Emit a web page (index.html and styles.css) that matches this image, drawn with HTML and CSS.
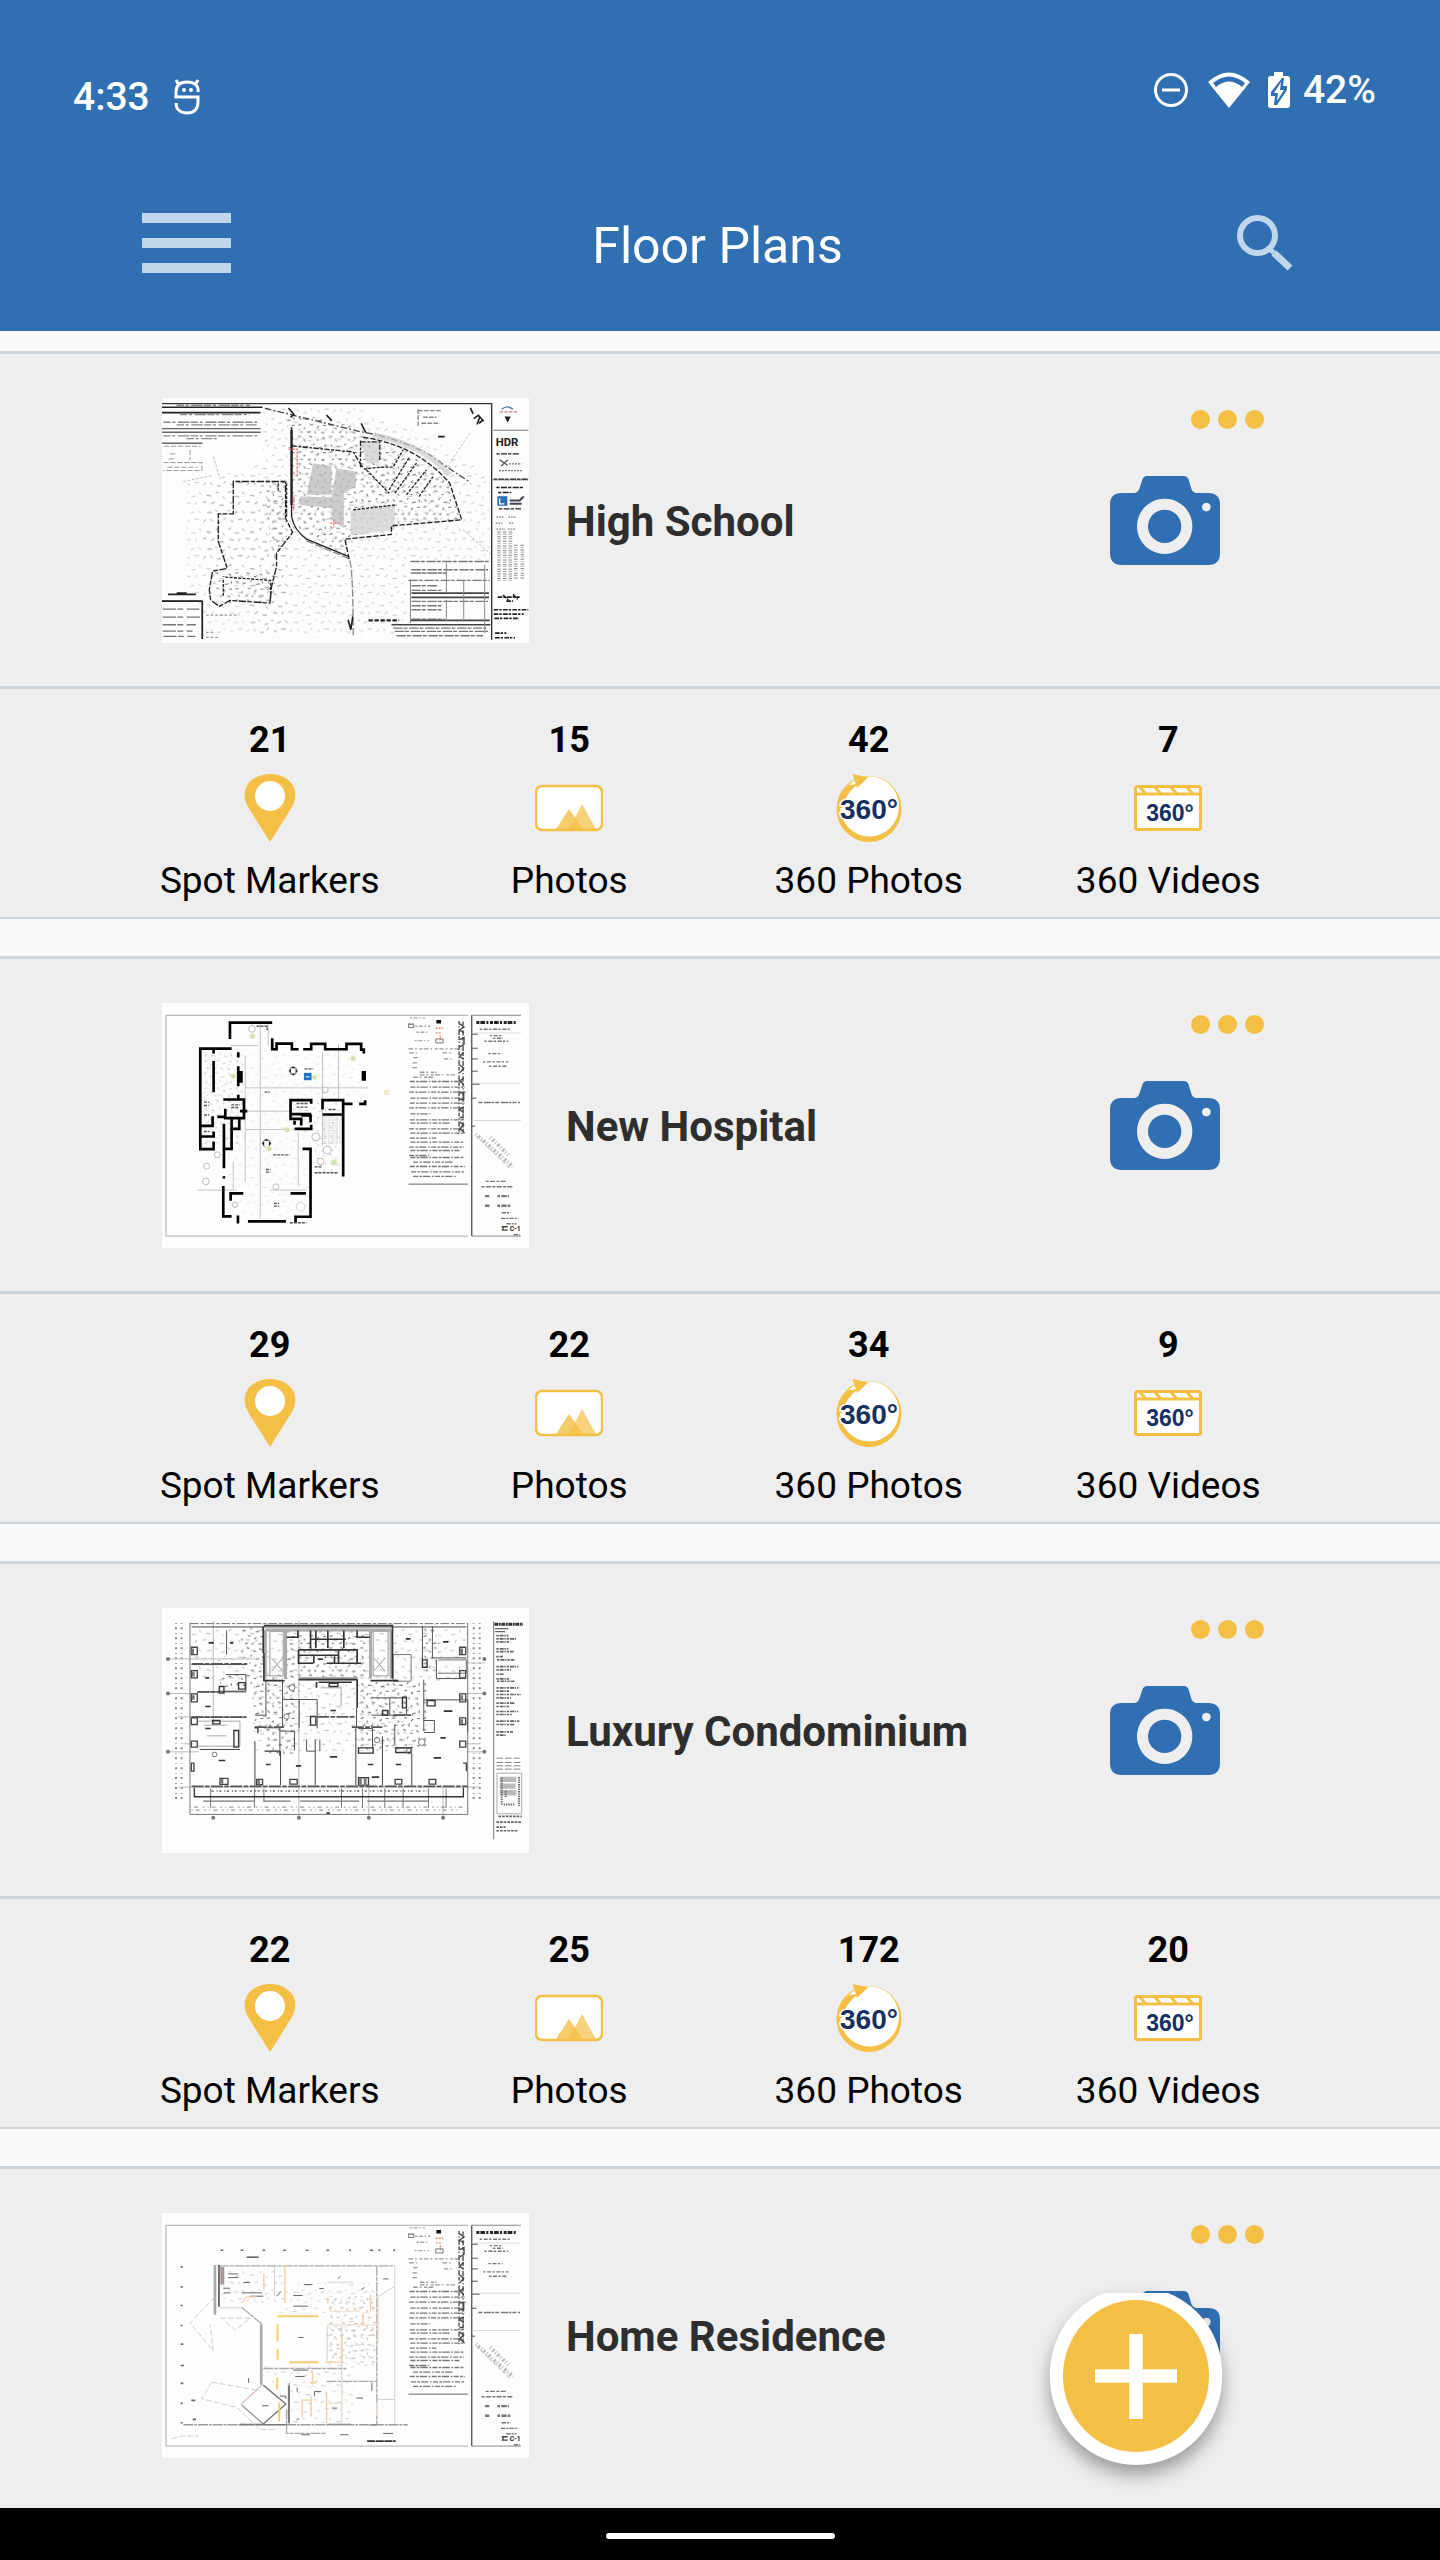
FILE: index.html
```html
<!DOCTYPE html>
<html lang="en">
<head>
<meta charset="utf-8">
<meta name="viewport" content="width=device-width, initial-scale=1">
<title>Floor Plans</title>
<link rel="stylesheet" href="styles.css">
</head>
<body>
<svg class="defs" aria-hidden="true">
  <defs>
    <pattern id="speckle" width="130" height="110" patternUnits="userSpaceOnUse">
      <path d="M5 8l9-3M25 20h12M48 6l4 7M70 16l13 2M98 8h7M118 20l5 6M10 38l12 3M36 44l4-8M58 36h11M84 42l10-6M108 46h13M4 62h6M22 70l11-4M46 62l7 8M72 68h14M96 60l5 5M114 74l11-3M12 92l8 4M34 88h13M60 96l8-7M82 88l4 6M102 98h10M122 90l4-6" fill="none" stroke="#777" stroke-width="2"/>
    </pattern>
    <pattern id="speckle-dark" width="94" height="82" patternUnits="userSpaceOnUse">
      <path d="M4 6h9M22 14l4 6M38 5l9 2M60 16h6M78 8l7 5M8 30l5 7M26 36h10M50 32l4-5M66 40l10-2M86 30v7M5 54l9-3M24 60v6M42 52h8M62 62l5-6M80 54h8M12 74h6M34 76l8-4M56 72v6M74 76h9" fill="none" stroke="#333" stroke-width="3"/>
    </pattern>
    <pattern id="hatch" width="12" height="8" patternUnits="userSpaceOnUse">
      <path d="M0 2h12M3 0v8" stroke="#bbb" stroke-width="1"/>
    </pattern>
  </defs>
</svg>
<svg class="symbols" aria-hidden="true">
  <symbol id="i-pin" viewBox="0 0 68 68">
    <path d="M34 68 12 33C2 14 16 0 34 0s32 14 22 33z" fill="#f4bf45"/>
    <circle cx="34" cy="22" r="15" fill="#fff"/>
  </symbol>
  <symbol id="i-photo" viewBox="0 0 68 68">
    <rect x="1" y="12" width="66" height="44" rx="6" fill="#fff" stroke="#f4bf45" stroke-width="2.5"/>
    <path d="M34 55 47 30 61 55z" fill="#f4bf45" opacity=".7"/>
    <path d="M21 55 34 35 48 55z" fill="#f4bf45" opacity=".8"/>
  </symbol>
  <symbol id="i-360" viewBox="0 0 68 68">
    <ellipse cx="34" cy="35" rx="32.500" ry="33" fill="#f4bf45"/>
    <ellipse cx="34.500" cy="32.500" rx="29.500" ry="30" fill="#fff"/>
    <path d="M14 11Q4 20 2 34h5Q10 20 23 10z" fill="#f4bf45"/>
    <path d="M17.500 0 33 3.500 22 14z" fill="#f4bf45"/>
    <text x="34" y="45" text-anchor="middle" class="deg deg-lg">360°</text>
  </symbol>
  <symbol id="i-video" viewBox="0 0 68 68">
    <rect x="1.500" y="12.500" width="65" height="43" rx="2" fill="#fff" stroke="#f4bf45" stroke-width="3"/>
    <path d="M1 20h66M5 12l7 8M20 12l7 8M36 12l7 8M52 12l7 8" stroke="#f4bf45" stroke-width="3"/>
    <text x="36" y="47" text-anchor="middle" class="deg deg-sm">360°</text>
  </symbol>
  <symbol id="i-camera" viewBox="0 0 330 267">
    <path fill="#316fb3" fill-rule="evenodd" d="M112 0H222Q232 0 236 11L244 38Q248 50 260 51H295Q330 51 330 86V232Q330 267 295 267H35Q0 267 0 232V86Q0 51 35 51H72Q84 50 88 38L97 11Q101 0 112 0ZM164 68A83 83 0 1 0 164.100 68ZM289 80A13 13 0 1 0 289.100 80Z"/>
    <circle cx="164" cy="151" r="50" fill="#316fb3"/>
  </symbol>

  <!-- Title block and notes shared by the sheets of one drawing set -->
  <symbol id="sheet" viewBox="66 43 1102 734">
    <g fill="none" stroke="#aaa" stroke-width="3">
      <path d="M78 79H985M78 742H985M78 79V742"/>
      <path d="M996 79H1144M996 742H1144" stroke="#888"/>
      <path d="M996 79V742" stroke="#555" stroke-width="4"/>
      <path d="M996 132h148M996 283h148M996 395h148" stroke="#ccc" stroke-width="2"/>
      <path d="M806 586H985" stroke="#666"/>
      <path d="M996 136h18M996 178h18M996 210h18M996 247h18M996 286h24M996 328h14M996 412h10" stroke="#555"/>
    </g>
    <g fill="none" stroke="#777" stroke-width="4">
      <path d="M810 87h50M806 104h16M826 112h48M830 130h36M824 155h44" stroke-dasharray="7 4 13 5 4 6" stroke="#aaa"/>
      <path d="M806 180h160M808 192h24M908 192h30M820 206h14M912 210h24M818 222h18M818 236h20M840 250h50M820 265h60M840 258h110" stroke-dasharray="14 6 5 8 9 4" stroke="#999"/>
      <path d="M810 278h160M812 295h164M808 310h170M812 328h160M810 343h164M808 357h160M812 375h60M810 393h160M812 403h120M808 420h160M812 433h164M810 448h80M812 460h160M808 475h164M812 485h150M808 500h60M812 506h160M820 520h120M810 533h165M814 549h160M820 563h130" stroke-dasharray="15 4 8 3 22 5 5 4"/>
      <path d="M1010 101h118" stroke="#222" stroke-width="9" stroke-dasharray="9 3 14 4 6 5"/>
      <path d="M1020 121h90M1050 140h40M1034 157h72M1060 148h30M1046 194h42M1030 219h76M1048 232h56" stroke-dasharray="7 5 12 4"/>
      <path d="M1016 341h125" stroke-dasharray="12 5 22 2 7 3"/>
      <path d="M1038 578h60M1026 594h92" stroke-dasharray="9 4 15 4"/>
      <path d="M1036 622h72M1036 651h76" stroke-dasharray="13 24 8 4 16 3" stroke-width="7"/>
      <path d="M1086 672h26M1084 689h52M1100 705h30M1122 738h18" stroke-dasharray="13 3 6 3"/>
      <path d="M1008 436l112 98M1052 446l54 52" stroke="#bbb" stroke-width="12" stroke-dasharray="3 6 7 5"/>
      <path d="M1010 442l100 96" stroke="#ccc" stroke-dasharray="12 6"/>
    </g>
    <path d="M890 93h14v11h-14z" fill="#111"/>
    <path d="M888 118h22M888 132h18M902 140v14" stroke="#e8965a" stroke-width="4" stroke-dasharray="6 3"/>
    <path d="M888 150h22v12h-22zM806 106h16v10h-16z" fill="none" stroke="#777" stroke-width="3"/>
    <path d="M958 96v340M970 98v330" stroke="#444" stroke-width="4" stroke-dasharray="11 5 4 6 16 4"/>
    <path d="M959 104l14 10-14 10 14 8M960 152l13-6v20l-13 8M972 190l-12 12 12 10M960 228l12 10-12 14M972 268l-12 8 12 12M960 312h12v20h-12M972 354l-12 8 12 10M960 386h12M960 400l12 8-12 12 14 12" fill="none" stroke="#444" stroke-width="4"/>
    <path d="M1086 714h18M1086 724h18M1090 712v14" stroke="#444" stroke-width="4"/>
    <text x="1110" y="726" font-size="20" font-weight="700" font-family="Roboto, sans-serif" fill="#222">C-1</text>
  </symbol>
</svg>

<header class="app-header">
  <div class="status-bar">
    <div class="status-left">
      <span>4:33</span>
      <svg width="26" height="36" viewBox="0 0 26 36" fill="none" stroke="#fff" stroke-width="3" aria-hidden="true">
        <path d="M24 13C25 6 20 3 13 3S2 6 2 13V18H24V23C24 30 20 34 13 34S2 30 2 24M2 1l3 5M24 1l-3 5"/>
        <circle cx="10" cy="11" r="1" stroke-width="2"/><circle cx="17" cy="11" r="1" stroke-width="2"/>
      </svg>
    </div>
    <div class="status-right">
      <svg width="36" height="36" viewBox="0 0 36 36" fill="none" stroke="#fff" stroke-width="3" aria-hidden="true">
        <circle cx="18" cy="18" r="15.500"/><path d="M9 18h18"/>
      </svg>
      <svg class="wifi" width="42" height="36" viewBox="0 0 42 36" aria-hidden="true">
        <path fill="#fff" fill-rule="evenodd" d="M0 10Q21-9 42 10L21 36ZM5 11L8 15Q21 4 34 15L37 11Q21-2 5 11Z"/>
      </svg>
      <svg class="battery" width="22" height="36" viewBox="0 0 22 36" aria-hidden="true">
        <path d="M6 0h9v4h4q3 0 3 3v26q0 3-3 3H3q-3 0-3-3V7q0-3 3-3h3z" fill="#fff"/>
        <path d="M14 6 3 20v4h4l-1 9h3l10-15v-4h-4l1-8z" fill="#316fb3"/>
        <path d="M13 10 6 21h4l-1 8 7-11h-4z" fill="#fff"/>
      </svg>
      <span>42%</span>
    </div>
  </div>
  <div class="toolbar">
    <button class="icon-button menu-button" type="button" aria-label="Menu"><i></i><i></i><i></i></button>
    <h1>Floor Plans</h1>
    <button class="icon-button search-button" type="button" aria-label="Search">
      <svg width="56" height="56" viewBox="0 0 56 56" fill="none" stroke="#c0d6ea" aria-hidden="true">
        <circle cx="20.500" cy="20.500" r="17.500" stroke-width="6"/>
        <path d="M34 35 37 38" stroke-width="5"/><path d="M37 38 53 53" stroke-width="7"/>
      </svg>
    </button>
  </div>
</header>

<main class="plans">
  <article class="plan">
    <div class="plan-head">
      <svg class="thumb" viewBox="66 55 1102 734" role="img" aria-label="High School site plan">
        <path d="M370 80H660L900 190 1050 290V540H800V775H330V560H190V300L370 250z" fill="url(#speckle)" opacity=".7"/>
        <path d="M140 300H450V770H200L140 600z" fill="url(#speckle)" opacity=".6"/>
        <path d="M440 90 640 140 700 200 800 215 930 310 965 420 755 440 620 475 620 530 460 450z" fill="url(#speckle-dark)" opacity=".75"/>
        <path d="M205 570H405V670H240zM370 300H440V480L400 560z" fill="url(#speckle-dark)" opacity=".7"/>
        <path d="M520 250 575 258V345L500 345ZM590 265 648 275V320L612 340V445L575 420V385L480 375V350L575 352Z" fill="#bbb" opacity=".75"/>
        <path d="M632 392 765 378V450L632 466ZM665 185H718V250H680z" fill="#d2d2d2" opacity=".8"/>
        <g fill="none" stroke="#222" stroke-width="4">
          <path d="M66 71H1056V780" stroke="#333"/>
          <path d="M66 82H368M66 98H362" stroke-width="5"/>
          <path d="M110 76h220M120 104h210M70 127h290M110 135h240M70 168h290M140 176h90" stroke="#888" stroke-dasharray="22 5 9 8 34 4"/>
          <path d="M66 146H362M66 157H362M66 190H188" stroke="#666"/>
          <path d="M72 199h110M90 222h20M150 210v30M86 237h22M70 248h116v24h-116M82 262h90" stroke="#999" stroke-width="3" stroke-dasharray="16 5"/>
          <path d="M455 142V410Q462 450 500 478L625 530"/>
          <path d="M455 150V376" stroke-width="7"/>
          <path d="M500 483 628 537Q640 560 640 770" stroke="#888" stroke-dasharray="22 7"/>
          <path d="M455 198 640 216 668 262M662 182V262M662 186H720V240" stroke-dasharray="16 5 8 4"/>
          <path d="M375 85 660 155Q780 175 870 225Q910 255 990 306" stroke="#444" stroke-dasharray="20 7 5 7"/>
          <path d="M670 172Q830 195 930 310L966 420 755 438V464L615 478 628 537" stroke-dasharray="16 5"/>
          <path d="M672 268Q720 260 760 262L790 210M680 270 748 340M748 330 810 230M765 340 830 250M800 345 860 270M838 350 880 290M640 390 770 375" stroke-dasharray="9 4"/>
          <path d="M700 165Q850 195 930 285" stroke="#ccc" stroke-width="16" opacity=".7"/>
          <path d="M436 305H280V402H235V485L262 566 218 574 208 630 212 660 238 680 270 662 390 670 395 620 410 560V520L458 458 437 415V305" stroke-dasharray="14 5 22 4"/>
          <path d="M415 310V332M440 310V410M250 600V650M256 592l136 10v60" stroke-dasharray="9 4"/>
          <path d="M990 160 930 250M970 450 1055 525M220 230l20 66M130 305l85-18" stroke="#999" stroke-width="2" stroke-dasharray="8 5"/>
          <path d="M835 88V138M835 92h70M850 112h40M845 130h55" stroke="#888" stroke-dasharray="14 4"/>
          <path d="M446 84l16 20-10 8M664 130l14 28M560 105l16 18M625 720l8 30 6-40M895 170h20" stroke-width="5"/>
          <path d="M992 84l8 18M1002 116l14-10 16 18M1012 134l8-22M1018 130l12-10" stroke-width="5"/>
          <path d="M84 644h84M110 640h30" stroke-width="5"/>
          <path d="M66 664H187V778M68 688h110M68 712h118M68 735h100M68 754h90M70 770h96" stroke="#777" stroke-dasharray="40 4 18 10"/>
          <path d="M187 664V778M66 664H187" stroke-width="5"/>
          <path d="M812 545H1050M815 570H1045M815 580H920M806 602H1050M815 618h80M815 632h90M815 665h230M815 678h90M815 690h90M815 718h100M760 745h280M765 755h280M770 768h260" stroke="#777" stroke-dasharray="28 3 12 5"/>
          <path d="M815 640H1048M815 653H1048M755 735H1052M812 722H1050" stroke="#444" stroke-width="5"/>
          <path d="M812 600V730M920 550V640M972 602V725M920 660V725M1035 555V760M920 580H812" stroke="#888" stroke-width="3"/>
          <path d="M686 722h92" stroke-dasharray="13 5" stroke-width="7"/>
          <path d="M198 706h100M198 758h24M198 773h42" stroke="#999" stroke-dasharray="8 6"/>
          <path d="M1060 151h106M1060 300h106" stroke="#777" stroke-width="3"/>
          <path d="M1062 298h104M1070 323h80M1075 338h40M1078 387h66M1070 222h68" stroke-dasharray="10 4 18 3"/>
          <path d="M1080 240l24 16M1104 240l-20 18" stroke="#655" stroke-width="4"/><path d="M1108 252h38M1078 272h70" stroke="#777" stroke-dasharray="6 3"/>
          <path d="M1070 412h22M1068 430h20M1106 412h24M1108 430h14M1070 448h26M1105 448h22" stroke="#777" stroke-dasharray="5 3"/>
          <path d="M1078 455V608M1095 455V608M1112 455V608M1128 495V600M1148 495V600" stroke="#888" stroke-width="11" stroke-dasharray="3 4 2 5"/>
          <path d="M1074 652h66M1090 646l16 14M1120 644l14 14M1100 664h20M1062 690h104M1062 703h90M1064 716h74M1066 760h34M1066 774h60" stroke-width="5" stroke-dasharray="14 3 7 4"/>
          <path d="M1086 88q16-14 34 0" stroke="#4a78a8"/><path d="M1080 96h56" stroke="#c77" stroke-dasharray="10 4"/>
          <path d="M1098 112h12l-6 12z" fill="#222"/>
          <path d="M446 208h26V290M462 350v44M570 430h30M582 418v26" stroke="#ee8280" stroke-dasharray="8 3"/>
        </g>
        <path d="M1073 349h30v29h-30z" fill="#316fb3"/>
        <path d="M1080 356v16h14" fill="none" stroke="#fff" stroke-width="4"/>
        <path d="M1110 362h30l12-12M1110 372h36" fill="none" stroke="#445" stroke-width="6"/>
        <text x="1068" y="197" font-size="34" font-weight="700" font-family="Roboto, sans-serif" fill="#222">HDR</text>
      </svg>
      <h2>High School</h2>
      <div class="plan-actions">
        <button class="icon-button more" type="button" aria-label="More options for High School"><i></i><i></i><i></i></button>
        <button class="icon-button" type="button" aria-label="Capture for High School"><svg class="camera" aria-hidden="true"><use href="#i-camera"/></svg></button>
      </div>
    </div>
    <ul class="stats">
      <li><b>21</b><svg aria-hidden="true"><use href="#i-pin"/></svg><span>Spot Markers</span></li>
      <li><b>15</b><svg aria-hidden="true"><use href="#i-photo"/></svg><span>Photos</span></li>
      <li><b>42</b><svg aria-hidden="true"><use href="#i-360"/></svg><span>360 Photos</span></li>
      <li><b>7</b><svg aria-hidden="true"><use href="#i-video"/></svg><span>360 Videos</span></li>
    </ul>
  </article>

  <article class="plan">
    <div class="plan-head">
      <svg class="thumb" viewBox="66 43 1102 734" role="img" aria-label="New Hospital floor plan">
        <use href="#sheet" x="66" y="43" width="1102" height="734"/>
        <path d="M185 185H665V340H510V690H255V480H185z" fill="url(#speckle)" opacity=".28"/>
        <path d="M190 190H310V470H190zM455 340H600V560H520V430H455z" fill="url(#speckle-dark)" opacity=".25"/>
        <path d="M548 382H606V466H548z" fill="url(#hatch)"/>
        <g fill="none" stroke="#c4c4c4" stroke-width="3">
          <path d="M361 100V690M385 100V170M316 200V580M548 190V470M596 165V330M316 297H685M316 367H450M316 422H450M172 604H290M390 604H500M270 170H355M475 430V590M280 520V600"/>
        </g>
        <g fill="none" stroke="#000" stroke-width="8">
          <path d="M270 150V101H397M397 148V181H410V164H456V181H476M490 181H514V165H556V181H620V165H664V182H672V194"/>
          <path d="M275 179H181V481H221V458M181 443H221V428M181 411H218V382M221 182V194M221 216V310M295 190V206M295 232V292M295 318V332M250 332H312V388H256V360M232 384H256M256 388H275V480H250M298 390V420H275M252 405V538M300 367H322"/>
          <path d="M514 345V334H452V390H484V410M452 376H514M464 396V408M484 380H512V400M464 420H514V408M548 362V334H610V563M548 377H610M610 345H638M658 345H676V334"/>
          <path d="M488 480H512V684H467V702M250 592V683H275M294 680V704M272 636V614H310M324 698H438M452 614H498M672 270V250"/>
          <path d="M302 246V282M672 246V276" stroke-width="13"/>
        </g>
        <g fill="#fff" stroke="#999" stroke-width="2">
          <circle cx="460" cy="246" r="12"/><circle cx="380" cy="464" r="12"/><circle cx="336" cy="120" r="10"/><circle cx="200" cy="532" r="9"/><circle cx="198" cy="578" r="10"/><circle cx="232" cy="498" r="9"/><circle cx="528" cy="444" r="12"/><circle cx="562" cy="484" r="12"/><circle cx="408" cy="594" r="9"/><circle cx="285" cy="648" r="8"/><circle cx="556" cy="303" r="9"/><circle cx="542" cy="518" r="10"/><circle cx="482" cy="654" r="13" stroke="#bbb"/>
        </g>
        <path d="M447 246l6-8v16zM473 246l-6-8v16zM460 232l-8 6h16zM460 260l-8-6h16zM366 464l7-8v16zM394 464l-7-8v16zM380 450l-8 6h16zM248 562h8v8h-8z" fill="#222"/>
        <path d="M350 112h32v12M274 348h26M274 356h22M192 340h16M192 350h14M192 378h16M374 310h16M400 498h50M378 542h14M378 550h14M402 644h16M402 652h16M192 428h16M470 344h34M470 355h34M566 362h22M524 534h22M524 552h70M494 240h26M450 702h50" fill="none" stroke="#555" stroke-width="4" stroke-dasharray="9 3"/>
        <path d="M492 252h23v22h-23z" fill="#1d72c4"/><path d="M497 264h12" stroke="#fff" stroke-width="3"/>
        <g fill="#c4e4cc" stroke="#f0e49a" stroke-width="3"><circle cx="338" cy="142" r="7"/><circle cx="280" cy="262" r="7"/><circle cx="524" cy="265" r="6"/><circle cx="640" cy="209" r="7"/><circle cx="388" cy="480" r="7"/><circle cx="442" cy="423" r="7"/><circle cx="583" cy="521" r="8"/><circle cx="740" cy="311" r="7" fill="#eee"/></g>
      </svg>
      <h2>New Hospital</h2>
      <div class="plan-actions">
        <button class="icon-button more" type="button" aria-label="More options for New Hospital"><i></i><i></i><i></i></button>
        <button class="icon-button" type="button" aria-label="Capture for New Hospital"><svg class="camera" aria-hidden="true"><use href="#i-camera"/></svg></button>
      </div>
    </div>
    <ul class="stats">
      <li><b>29</b><svg aria-hidden="true"><use href="#i-pin"/></svg><span>Spot Markers</span></li>
      <li><b>22</b><svg aria-hidden="true"><use href="#i-photo"/></svg><span>Photos</span></li>
      <li><b>34</b><svg aria-hidden="true"><use href="#i-360"/></svg><span>360 Photos</span></li>
      <li><b>9</b><svg aria-hidden="true"><use href="#i-video"/></svg><span>360 Videos</span></li>
    </ul>
  </article>

  <article class="plan">
    <div class="plan-head">
      <svg class="thumb" viewBox="66 51 1102 734" role="img" aria-label="Luxury Condominium floor plan">
        <path d="M155 100H985V270H820V480H340V270H155z" fill="url(#speckle)" opacity=".8"/>
        <path d="M240 250H480V420H350V290H240zM650 270H860V480H650zM325 185H375V400H345zM440 120H680V260H440zM375 400H465V490H375zM300 105H370V200H300zM845 105H890V240H845z" fill="url(#speckle-dark)" opacity=".8"/>
        <path d="M108 96V635M125 96V635M1002 96V635M1020 96V635" stroke="#888" stroke-width="6" stroke-dasharray="2 10 6 12"/>
        <g fill="none" stroke="#777" stroke-width="3">
          <path d="M84 203H340M84 307H175M84 482H175M115 377H160M130 458H160M115 588H1022M975 215H1035M975 307H1035M975 458H1020M980 482H1035" stroke="#bbb"/>
          <path d="M220 90V400M477 90V680M687 588V680M910 588V680" stroke="#bbb"/>
          <path d="M150 95V670M984 95V670M150 670H984M212 592V650M344 592V650M372 592V630M605 592V650M668 592V650M735 592V650M790 592V650M866 592V650M919 592V650"/>
          <path d="M150 97H984" stroke-dasharray="26 6 10 5"/>
          <path d="M150 648H984M155 657H960" stroke-dasharray="3 9 12 14 5 10" stroke="#888"/>
          <path d="M215 600H860" stroke-dasharray="6 9 3 5" stroke="#888" stroke-width="6"/>
          <path d="M190 630H345M370 630H452M480 630H658M682 630H866" stroke-width="4"/>
          <path d="M155 107H370M760 107H980M155 220H320M172 302H318M155 378H318M180 475H300M345 450V582M422 480V582M526 445V582M648 408V582M728 436V582M816 486V582" stroke="#444"/>
          <path d="M260 118V190M378 270V372M346 372H380M428 270V410M431 325H532V412M478 325V410M650 350V408M695 320H800V372H695M750 320V372M852 265V420M852 326H984V424M848 105V220M878 105V200H980M890 205V262H980M258 250H318V300H236M372 410H420V478M422 420H464V478M655 412H698V470M765 400V460M764 470H816M500 445V480H526M540 445V480M852 388H884V424H852" stroke="#555"/>
          <path d="M172 390H300V465H172M548 290H604V345M192 402h70M200 434h60" stroke="#aaa"/>
          <path d="M390 120H430V254H390zM700 120H745V254H700zM395 200l34 40M429 200l-34 40M702 200l34 40M736 200l-34 40" stroke="#999"/>
          <path d="M760 190H814V270H760zM895 206H980V246H895" stroke="#777"/>
        </g>
        <path d="M372 106H758M376 116V262M437 116V262M692 116V262M754 116V262M478 262H654M376 116H754" fill="none" stroke="#aaa" stroke-width="9"/>
        <g fill="none" stroke="#333" stroke-width="5">
          <path d="M370 105V185M372 103H758V262M372 185V268H434M692 268H776M476 265H652M652 265V350M530 272V290M536 273H636M512 144H618M476 176H654M476 192H596M596 176V216M476 176V218M522 195V216M584 195V216M652 176V216M476 216H520M560 216H664M512 170V118M528 118V170M564 118V170M612 118V170M440 138H474V118M652 118V138H690"/>
          <path d="M163 590V617H971V590" stroke-width="4"/>
          <path d="M155 218H322M155 586H984M172 302H236M155 378H320M344 408H432M636 408H728M760 372H820M532 377H650" stroke="#555" stroke-dasharray="36 4 14 4"/>
          <path d="M296 274h20v20h-20zM238 286h14v20h-14zM282 418h14v50h-14zM862 328h24v16h-24zM788 318h12v32h-12zM728 358h16v14h-16zM512 376h16v26h-16zM344 410h10v16M374 480h46v14M656 470h44v16h-44zM768 470h46v14h-46zM848 206h14v22h-14zM218 388h22v10h-22zM568 276h26v10h-26z" stroke-width="4"/>
          <path d="M154 168h18v22h-18zM154 238h18v22h-18zM154 308h18v24h-18zM154 380h18v20h-18zM154 450h18v18h-18zM154 516h8v24h-8zM960 168h18v22h-18zM960 238h18v22h-18zM960 308h18v24h-18zM960 380h18v20h-18zM960 450h18v18h-18zM970 516h10v24M240 562h24v18h-24zM350 565h18v16h-18zM450 565h22v14h-22zM656 560h30v22h-30zM766 565h20v14h-20zM868 565h20v14h-20z" stroke="#444" stroke-width="4"/>
          <path d="M158 172v16M160 242v14M160 312v14M246 564v14M356 566v14M662 562v18M676 562v18M966 172v16M966 312v14M966 384v14" stroke="#777" stroke-width="8"/>
        </g>
        <g fill="#777"><circle cx="84" cy="203" r="6"/><circle cx="84" cy="307" r="6"/><circle cx="84" cy="482" r="6"/><circle cx="1034" cy="203" r="6"/><circle cx="1034" cy="307" r="6"/><circle cx="1034" cy="482" r="6"/><circle cx="220" cy="680" r="6"/><circle cx="477" cy="680" r="6"/><circle cx="687" cy="680" r="6"/><circle cx="910" cy="680" r="6"/></g>
        <g fill="none" stroke="#777" stroke-width="3"><circle cx="456" cy="289" r="9"/><circle cx="440" cy="376" r="8"/><circle cx="224" cy="490" r="7"/><circle cx="712" cy="447" r="8"/><circle cx="846" cy="453" r="10"/><circle cx="808" cy="480" r="8"/></g>
        <path d="M206 155h16M270 155h10M798 143h14M910 152h16M196 260h12M196 346h16M196 412h16M236 508h20M378 520h14M468 524h16M572 358h16M570 497h22M684 520h16M768 520h16M882 500h22M902 440h16M912 360h26M560 666h10M534 204h16M696 558h22" stroke="#333" stroke-width="5"/>
        <path d="M1062 90V745" stroke="#777" stroke-width="3"/>
        <g fill="none" stroke="#666">
          <path d="M1064 99h86" stroke="#333" stroke-width="9" stroke-dasharray="11 2 6 2"/>
          <path d="M1066 112h40M1066 121h30" stroke-width="4"/>
          <path d="M1070 133h36M1070 143h60M1070 152h42M1070 173h36M1070 181h52M1070 196h20M1072 206h52M1070 226h66M1070 236h44M1070 249h24M1070 263h40M1072 270h52M1070 290h66M1070 300h40M1070 310h74M1070 320h44M1070 336h56M1070 346h40M1070 361h66M1070 370h46M1070 390h70M1070 400h56M1070 422h50M1070 432h30" stroke-width="5" stroke-dasharray="7 3 12 2 4 3"/>
          <path d="M1070 501h70M1070 514h75M1070 524h76M1070 534h76" stroke="#888" stroke-width="3" stroke-dasharray="20 6"/>
          <path d="M1072 546H1146V668H1072z" stroke="#aaa" stroke-width="3"/>
          <path d="M1080 565H1130M1080 585h48M1080 605h50" stroke="#bbb" stroke-width="16"/>
          <path d="M1086 560V642M1138 558V645M1092 640h32M1098 600v20" stroke-width="6" stroke-dasharray="4 3"/>
          <path d="M1076 676h70M1070 693h76M1070 708h28M1070 719h66" stroke-width="5" stroke-dasharray="8 3"/>
        </g>
      </svg>
      <h2>Luxury Condominium</h2>
      <div class="plan-actions">
        <button class="icon-button more" type="button" aria-label="More options for Luxury Condominium"><i></i><i></i><i></i></button>
        <button class="icon-button" type="button" aria-label="Capture for Luxury Condominium"><svg class="camera" aria-hidden="true"><use href="#i-camera"/></svg></button>
      </div>
    </div>
    <ul class="stats">
      <li><b>22</b><svg aria-hidden="true"><use href="#i-pin"/></svg><span>Spot Markers</span></li>
      <li><b>25</b><svg aria-hidden="true"><use href="#i-photo"/></svg><span>Photos</span></li>
      <li><b>172</b><svg aria-hidden="true"><use href="#i-360"/></svg><span>360 Photos</span></li>
      <li><b>20</b><svg aria-hidden="true"><use href="#i-video"/></svg><span>360 Videos</span></li>
    </ul>
  </article>

  <article class="plan">
    <div class="plan-head">
      <svg class="thumb" viewBox="66 51 1102 734" role="img" aria-label="Home Residence floor plan">
        <use href="#sheet" x="66" y="51" width="1102" height="734"/>
        <path d="M245 215H430V320H245zM415 260H710V350H415zM560 370H710V510H560zM370 510H640V680H450V560H370z" fill="url(#speckle)" opacity=".6"/>
        <path d="M565 300H708V500H565z" fill="url(#speckle-dark)" opacity=".4"/>
        <path d="M242 162h8M302 162h8M368 162h8M430 162h8M498 162h8M560 162h8M628 162h6M690 162h10M716 162h6M760 162h6M122 212h6M122 272h6M122 328h6M122 388h6M122 444h8M122 508h10M122 562h8M122 622h6M122 680h6M154 613h12M320 183h36M158 670h10" stroke="#666" stroke-width="5"/>
        <g fill="none" stroke="#999" stroke-width="4">
          <path d="M236 209H765M711 209V686M306 334 364 382V566M370 517H620M448 560V685M440 640V712H560M370 684H300M560 556H710" stroke="#aaa" stroke-dasharray="30 3 12 3"/>
          <path d="M304 626 370 684"/>
          <path d="M765 209V270L716 300M765 270V686M711 610H765M240 335H306M404 205V300M562 258H640M562 388V500M606 388V680" stroke="#bbb" stroke-width="2"/>
          <path d="M225 206V356M364 385V566" stroke="#aaa" stroke-width="8"/>
          <path d="M237 206V332" stroke="#555" stroke-width="5"/><path d="M247 212V265" stroke="#a99" stroke-width="12"/>
          <path d="M370 684 438 624 370 567M560 685H632M690 686H712M300 686H440" stroke="#777" stroke-width="4"/>
          <path d="M304 624 366 567" stroke="#dcbcbc"/>
          <path d="M130 686H300M438 686H804" stroke-width="4" stroke-dasharray="30 3 8 3"/>
          <path d="M447 568V680" stroke="#777" stroke-width="6"/>
          <path d="M225 302 150 380 220 464 210 385M240 366H330L286 402 250 370M215 558 360 584M215 558 185 608 290 634 360 700 410 700M95 728l30-8 50 0" stroke="#ccc" stroke-dasharray="18 6" stroke-width="3"/>
          <path d="M265 233h30M265 244h30M250 276h20M252 290h20M310 259h20M460 298h28M475 424h16M460 330h44M460 522h44M466 541h28M492 265h26M538 277h14M594 248l8-8M730 248h16M664 280l10-6M324 183h30M366 629h20M576 636h16M470 671l8-4M650 606h20M730 712h30M600 716h26M484 716h26M696 560v24M472 575v12M326 546v14" stroke="#666" stroke-width="3"/>
          <path d="M420 600h18v8M524 600v-14h20M410 300l14-14M306 290h60M330 300h40" stroke="#666" stroke-width="3"/>
          <path d="M682 735h86" stroke="#333" stroke-width="5" stroke-dasharray="24 2"/>
        </g>
        <g fill="none" stroke="#f3cda4" stroke-width="4">
          <path d="M372 232V282M435 208V320M320 302H350L320 302 306 320M564 306V322M692 296V346M670 350V390M606 420V498H556M518 524V565M510 560H530M487 614V664M514 600V662M487 612H514M560 590V680"/>
          <path d="M568 345H660M562 386H712M562 622H604M716 300V440M606 540V620M711 620V660" stroke="#f0e0d2"/>
        </g>
        <path d="M413 360H536M449 498H536M413 384V436M413 460V490M418 620V676M412 545V580" fill="none" stroke="#f5cd70" stroke-width="6"/>
      </svg>
      <h2>Home Residence</h2>
      <div class="plan-actions">
        <button class="icon-button more" type="button" aria-label="More options for Home Residence"><i></i><i></i><i></i></button>
        <button class="icon-button" type="button" aria-label="Capture for Home Residence"><svg class="camera" aria-hidden="true"><use href="#i-camera"/></svg></button>
      </div>
    </div>
  </article>
</main>

<button class="icon-button fab" type="button" aria-label="Add floor plan">
  <svg width="172" height="172" viewBox="0 0 172 172" aria-hidden="true">
    <path d="M55 0H118A86 86 0 0 1 172 84A86 88 0 0 1 0 84A86 86 0 0 1 55 0Z" fill="#fff"/>
    <ellipse cx="86" cy="83" rx="73" ry="76" fill="#f4bf45"/>
    <path d="M45 83H127M86 41V126" stroke="#fff" stroke-width="13.500"/>
  </svg>
</button>

<footer class="system-nav"><span></span></footer>
</body>
</html>
```
FILE: styles.css
```css
* {
  box-sizing: border-box;
}

body {
  position: relative;
  display: flex;
  flex-direction: column;
  min-height: 100vh;
  margin: 0;
  background: #fafafa;
  color: #000;
  font-family: Roboto, sans-serif;
}

h1,
h2,
ul {
  margin: 0;
  padding: 0;
}

svg {
  display: block;
}

.defs {
  position: absolute;
  width: 0;
  height: 0;
}

.symbols {
  display: none;
}

.icon-button {
  display: block;
  padding: 0;
  border: 0;
  background: none;
  cursor: pointer;
}

/* Header */
.app-header {
  padding-top: 67px;
  background: #316fb3;
  color: #fff;
}

.status-bar {
  display: flex;
  justify-content: space-between;
  height: 53px;
  padding: 0 64px 0 73px;
  font-size: 39px;
  font-weight: 500;
  line-height: 46px;
}

.status-left,
.status-right {
  display: flex;
  align-items: center;
  height: 46px;
}

.status-left {
  align-self: flex-end;
  gap: 24px;
}

.status-right {
  gap: 13px;
}

.wifi {
  margin: 0 5px 0 6px;
}

.toolbar {
  display: grid;
  grid-template-columns: 1fr auto 1fr;
  align-items: center;
  height: 211px;
  padding: 34px 147px 0 142px;
}

.toolbar h1 {
  padding-top: 6px;
  font-size: 50px;
  font-weight: 400;
  line-height: 60px;
}

.menu-button {
  display: grid;
  gap: 15px;
  width: 89px;
}

.menu-button i {
  height: 10px;
  background: #c0d6ea;
}

.search-button {
  justify-self: end;
}

/* Plan cards */
.plans {
  display: flex;
  flex: 1;
  flex-direction: column;
  gap: 37px;
  padding-top: 20px;
}

.plan {
  border-top: 3px solid #ccd5dc;
  border-bottom: 2px solid #ccd5dc;
  background: #eee;
}

.plan:last-child {
  flex: 1;
  border-bottom: 0;
}

.plan-head {
  display: flex;
  gap: 37px;
  height: 332px;
  padding: 44px 176px 43px 162px;
}

.thumb {
  flex: none;
  width: 367px;
  height: 245px;
  background: #fdfdfd;
}

.plan h2 {
  flex: 1;
  align-self: center;
  padding-top: 2px;
  color: #2e2e2e;
  font-size: 42px;
  font-weight: 700;
  line-height: 50px;
}

.plan-actions {
  display: flex;
  flex-direction: column;
  align-items: flex-start;
  gap: 47px;
  width: 154px;
  padding-top: 12px;
}

.more {
  display: flex;
  align-self: flex-end;
  gap: 8px;
}

.more i {
  width: 19px;
  height: 19px;
  border-radius: 50%;
  background: #f4bf45;
}

.camera {
  width: 110px;
  height: 89px;
}

.stats {
  display: grid;
  grid-template-columns: repeat(4, 1fr);
  padding: 29px 122px 14px 120px;
  border-top: 3px solid #ccd5dc;
  list-style: none;
}

.stats li {
  display: flex;
  flex-direction: column;
  align-items: center;
  font-size: 37px;
  line-height: 44px;
}

.stats b {
  font-size: 36px;
  font-weight: 700;
}

.stats svg {
  width: 68px;
  height: 68px;
  margin: 12px 0 17px;
}

.deg {
  fill: #16305f;
  stroke: #fff;
  stroke-width: 3px;
  paint-order: stroke;
  font-family: "Liberation Sans", sans-serif;
  font-weight: 700;
}

.deg-lg {
  font-size: 28px;
}

.deg-sm {
  font-size: 23px;
}

/* Floating add button */
.fab {
  position: absolute;
  right: 218px;
  bottom: 95px;
  filter: drop-shadow(0 10px 9px rgba(0, 0, 0, 0.35));
}

.system-nav {
  display: flex;
  align-items: center;
  justify-content: center;
  height: 52px;
  padding-top: 4px;
  background: #000;
}

.system-nav span {
  width: 229px;
  height: 6px;
  border-radius: 3px;
  background: #fff;
}
```
